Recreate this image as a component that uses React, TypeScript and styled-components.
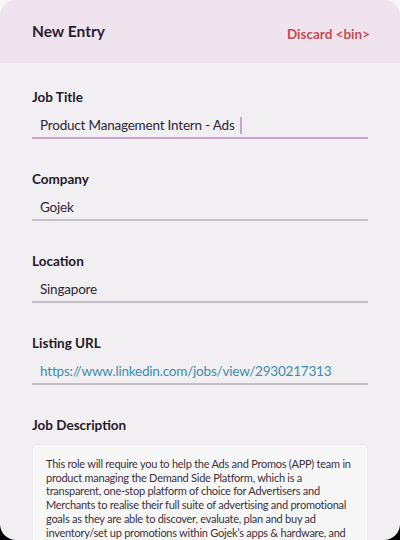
import styled, { createGlobalStyle } from 'styled-components';

const GlobalStyle = createGlobalStyle`
  html, body {
    margin: 0;
    padding: 0;
    height: 100%;
  }
  body {
    background: linear-gradient(#f7f5f7 0 50%, #000 50% 100%);
    font-family: Lato, "Noto Sans", sans-serif;
    overflow: hidden;
  }
`;

const fields = [
  { label: 'Job Title', value: 'Product Management Intern - Ads', active: true },
  { label: 'Company', value: 'Gojek' },
  { label: 'Location', value: 'Singapore' },
  { label: 'Listing URL', value: 'https://www.linkedin.com/jobs/view/2930217313', link: true },
];

// line breaks follow the original text box
const descriptionLines = [
  'This role will require you to help the Ads and Promos (APP) team in',
  'product managing the Demand Side Platform, which is a',
  'transparent, one-stop platform of choice for Advertisers and',
  'Merchants to realise their full suite of advertising and promotional',
  'goals as they are able to discover, evaluate, plan and buy ad',
  'inventory/set up promotions within Gojek\u2019s apps & hardware, and',
];

const App = () => {
  return (
    <>
      <GlobalStyle />
      <Screen>
        <Header>
          <Title>New Entry</Title>
          <Discard>Discard &lt;bin&gt;</Discard>
        </Header>
        <Form>
          {fields.map((f) => (
            <Field key={f.label}>
              <Label>{f.label}</Label>
              <InputLine active={!!f.active}>
                <Value link={!!f.link}>{f.value}</Value>
                {f.active && <Caret />}
              </InputLine>
            </Field>
          ))}
          <Field>
            <Label>Job Description</Label>
            <TextBox>
              {descriptionLines.map((line) => (
                <TextLine key={line}>{line}</TextLine>
              ))}
            </TextBox>
          </Field>
        </Form>
      </Screen>
    </>
  );
};

export default App;

const Screen = styled.div`
  width: 400px;
  height: 540px;
  border-radius: 16px;
  overflow: hidden;
  background: #f2eff3;
  display: flex;
  flex-direction: column;
`;

const Header = styled.div`
  height: 63px;
  flex-shrink: 0;
  background: #efe4ee;
  padding: 0 30px 0 32px;
  display: flex;
  align-items: center;
  justify-content: space-between;
`;

const Title = styled.h1`
  margin: 0 0 2px;
  font-size: 15.5px;
  font-weight: 700;
  color: #2b1d2f;
`;

const Discard = styled.button`
  border: none;
  background: none;
  padding: 0;
  margin-top: 5px;
  font-family: inherit;
  font-size: 13.5px;
  font-weight: 700;
  color: #c94a52;
  cursor: pointer;
`;

const Form = styled.div`
  padding: 25px 32px 0;
  display: flex;
  flex-direction: column;
  gap: 31px;
`;

const Field = styled.div`
  display: flex;
  flex-direction: column;
`;

const Label = styled.label`
  font-size: 13.5px;
  line-height: 18px;
  font-weight: 700;
  color: #241a28;
  margin-bottom: 7px;
`;

const InputLine = styled.div<{ active: boolean }>`
  height: 24px;
  display: flex;
  align-items: center;
  padding-left: 8px;
  border-bottom: 2px solid ${({ active }) => (active ? '#c9a4cf' : '#c3c0c5')};
`;

const Value = styled.span<{ link: boolean }>`
  font-size: 13.5px;
  letter-spacing: -0.2px;
  color: ${({ link }) => (link ? '#3b8db0' : '#2e2631')};
  white-space: nowrap;
`;

const Caret = styled.span`
  width: 2px;
  height: 17px;
  margin-left: 5px;
  background: #c9a4cf;
`;

const TextBox = styled.div`
  margin-top: 3px;
  background: #f8f7f8;
  border: 1px solid #eeebee;
  border-radius: 4px;
  padding: 12px 13px;
  height: 140px;
`;

const TextLine = styled.div`
  font-size: 11px;
  line-height: 13.7px;
  letter-spacing: -0.25px;
  color: #3b3140;
  white-space: nowrap;
`;
